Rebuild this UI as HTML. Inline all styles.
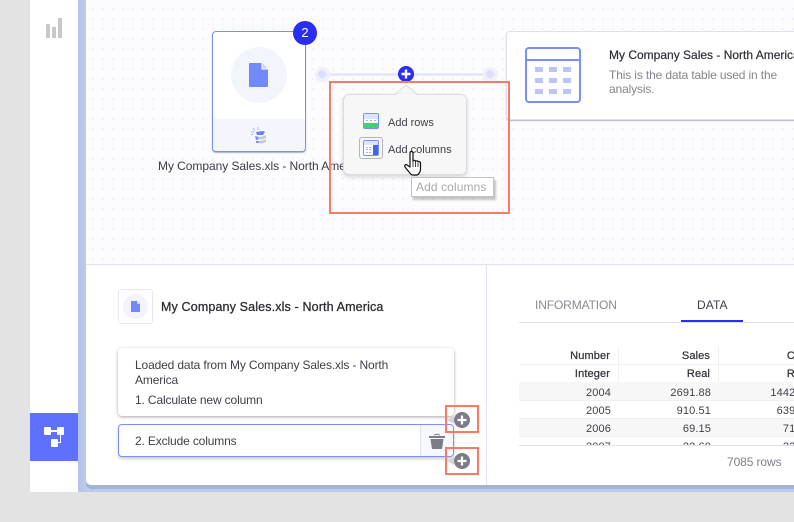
<!DOCTYPE html>
<html><head><meta charset="utf-8">
<style>
html,body{margin:0;padding:0;width:794px;height:522px;overflow:hidden;background:#e3e3e3}
body{position:relative;font-family:"Liberation Sans",sans-serif;font-size:12px;color:#3c3c48}
div,span,svg{position:absolute;box-sizing:border-box}
.t{white-space:nowrap;line-height:14px}
.s{letter-spacing:-.14px}
.r{text-align:right;width:90px;font-size:11px;letter-spacing:.12px;color:#3f3f4a;line-height:14px;white-space:nowrap}
.h{color:#33333d;-webkit-text-stroke:.25px #33333d}
</style></head><body>
<div style="left:30px;top:0;width:48px;height:492px;background:#fff"></div>
<svg style="left:46px;top:18px" width="16" height="20"><g fill="#c8c8ca"><rect x="0" y="6" width="4" height="14"/><rect x="6" y="9" width="4" height="11"/><rect x="12" y="0" width="4" height="20"/></g></svg>
<div style="left:30px;top:413px;width:48px;height:48px;background:#5f70ff"></div>
<svg style="left:44px;top:427px" width="20" height="20"><g fill="#fff"><rect x="0" y="0" width="7" height="8" rx="1"/><rect x="13" y="0" width="7" height="8" rx="1"/><rect x="7" y="12" width="7" height="8" rx="1"/><rect x="6" y="3" width="8" height="2"/><rect x="16" y="7" width="1" height="9"/><rect x="13" y="15" width="4" height="1"/></g></svg>
<div style="left:78px;top:0;width:716px;height:492px;background:#bccaeb"></div>
<div style="left:78px;top:0;width:8px;height:492px;background:linear-gradient(90deg,#b4c3e6,#bccaeb)"></div>
<div style="left:86px;top:0;width:708px;height:489px;background:#a5b3d3;border-bottom-left-radius:5px"></div>
<div style="left:86px;top:0;width:708px;height:485px;background:#fff;border-bottom-left-radius:5px;overflow:hidden">
<div style="left:0;top:0;width:708px;height:265px;background-color:#fcfcfe;background-image:radial-gradient(circle at 2px 2px,#f0f0f6 1px,transparent 1.3px);background-size:10px 10px;background-position:5px 7px;border-bottom:1px solid #e2e2ef"></div>
<div style="left:400px;top:265px;width:1px;height:220px;background:#e2e2ef"></div>
</div>

<div style="left:212px;top:31px;width:94px;height:121px;background:#fff;border:1px solid #7a8ff5;border-radius:4px;box-shadow:0 1px 1px #a9b0cc;overflow:hidden">
<div style="left:0;top:87px;width:92px;height:33px;background:#f5f6fd"></div>
</div>
<div style="left:231px;top:47px;width:56px;height:56px;border-radius:50%;background:#f3f5fd"></div>
<svg style="left:249px;top:63px" width="20" height="24"><path d="M1 0H13L19 6V23a1 1 0 0 1-1 1H1a1 1 0 0 1-1-1V1a1 1 0 0 1 1-1z" fill="#7289fc"/><path d="M13.500 0.500V5.500H18.500z" fill="#cdd5fb"/><path d="M13 0L13 6L19 6" fill="none" stroke="#fff" stroke-width="1"/></svg>
<svg style="left:250px;top:127px" width="18" height="17"><g fill="none" stroke="#a9b6fb" stroke-width="1"><path d="M1 5h3M3 1l2 2.500M8 0v3M1 8l2-1"/></g><path d="M6 5l7-1 2 1-2 3H7z" fill="#6a80f7"/><path d="M5 9l4 1-1 3H6zM6 14h3v2H6z" fill="#7c92fb"/><path d="M9 10c3 0 6-1 7-2v3c-2 1-5 2-7 1zM9 14c3 0 6-1 7-2v3c-2 1-5 2-7 1z" fill="#c6c8ce"/></svg>
<div style="left:293px;top:21px;width:24px;height:24px;border-radius:50%;background:#2a2df5;color:#fff;text-align:center;font-size:13px;line-height:24px">2</div>
<div class="t" style="left:158px;top:159px;width:186px;overflow:hidden;color:#3c3c48;letter-spacing:-.05px">My Company Sales.xls - North America</div>

<div style="left:322px;top:73px;width:168px;height:3px;background:#e4e7fd"></div>
<div style="left:315px;top:67px;width:15px;height:15px;border-radius:50%;background:#eff0fc"></div>
<div style="left:318px;top:70px;width:8px;height:8px;border-radius:50%;background:#dcdffa"></div>
<div style="left:483px;top:67px;width:15px;height:15px;border-radius:50%;background:#eff0fc"></div>
<div style="left:486px;top:70px;width:8px;height:8px;border-radius:50%;background:#dcdffa"></div>
<svg style="left:398px;top:66px" width="16" height="16"><circle cx="8" cy="8" r="8" fill="#2a2df5"/><path d="M8 3.500V12.500M3.500 8H12.500" stroke="#fff" stroke-width="2.400"/></svg>

<div style="left:506px;top:31px;width:300px;height:89px;background:#fff;border:1px solid #dfe0ea;border-radius:4px;box-shadow:0 1px 1px #b5b6c2"></div>
<svg style="left:525px;top:47px" width="56" height="56"><rect x="1" y="1" width="54" height="54" rx="3" fill="none" stroke="#7a8ffb" stroke-width="2"/><path d="M1 13H55" stroke="#7a8ffb" stroke-width="2"/><g fill="#b9c5fb"><rect x="10" y="20" width="8" height="5"/><rect x="24" y="20" width="8" height="5"/><rect x="38" y="20" width="8" height="5"/><rect x="10" y="31" width="8" height="5"/><rect x="24" y="31" width="8" height="5"/><rect x="38" y="31" width="8" height="5"/><rect x="10" y="42" width="8" height="5"/><rect x="24" y="42" width="8" height="5"/><rect x="38" y="42" width="8" height="5"/></g></svg>
<div class="t" style="left:609px;top:48px;color:#2e2e38;font-weight:400;-webkit-text-stroke:.2px #2e2e38">My Company Sales - North America</div>
<div class="t s" style="left:609px;top:68px;color:#85858f">This is the data table used in the</div>
<div class="t s" style="left:609px;top:82px;color:#85858f">analysis.</div>

<div style="left:329px;top:81px;width:181px;height:133px;border:2px solid #fb7a65"></div>

<svg style="left:392px;top:84px" width="28" height="13"><path d="M1 12L14 1L27 12" fill="#f7f7f7" stroke="#dcdcdc" stroke-width="1"/></svg>
<div style="left:343px;top:94px;width:124px;height:81px;background:#f7f7f7;border:1px solid #dcdcdc;border-top-color:#dcdcdc;border-radius:6px;box-shadow:0 2px 4px rgba(0,0,0,.16)"></div>
<div style="left:396px;top:94px;width:20px;height:2px;background:#f7f7f7"></div>
<svg style="left:363px;top:113px" width="16" height="16"><rect x=".5" y=".5" width="15" height="15" rx="1.500" fill="#fff" stroke="#7a8ffb"/><rect x="1" y="1" width="14" height="5" fill="#dfe4fd"/><rect x="1" y="10" width="14" height="5" fill="#3dd56f"/><g fill="#9fb0fb"><rect x="3" y="7" width="2" height="1"/><rect x="7" y="7" width="2" height="1"/><rect x="11" y="7" width="2" height="1"/></g></svg>
<div style="left:359px;top:137px;width:24px;height:22px;border:1px solid #b4b4ba;border-radius:3px"></div>
<svg style="left:363px;top:140px" width="16" height="16"><rect x=".5" y=".5" width="15" height="15" rx="1.500" fill="#fff" stroke="#7a8ffb"/><rect x="1" y="1" width="14" height="4" fill="#dfe4fd"/><rect x="10" y="5" width="5" height="10" fill="#4565e8"/><g fill="#9fb0fb"><rect x="3" y="7" width="2" height="1"/><rect x="6" y="7" width="2" height="1"/><rect x="3" y="9" width="2" height="1"/><rect x="6" y="9" width="2" height="1"/><rect x="3" y="12" width="2" height="1"/><rect x="6" y="12" width="2" height="1"/></g></svg>
<div class="t" style="left:388px;top:116px;font-size:11px;color:#3f3f4a">Add rows</div>
<div class="t" style="left:388px;top:143px;font-size:11px;color:#3f3f4a">Add columns</div>
<div class="t" style="left:411px;top:177px;width:83px;height:20px;background:#fff;border:1px solid #c2c2c2;box-shadow:2px 3px 2px rgba(0,0,0,.22);font-size:12px;letter-spacing:.1px;line-height:18px;padding-left:4px;color:#a9a9a9">Add columns</div>
<svg style="left:404px;top:151px" width="22" height="26"><path d="M6 2c0-2 3-2 3 0V10c0-1 2.500-1 2.500 .5 0-1 2.500-1 2.500 .5 0-1 2.500-.5 2.500 1V18c0 3-2 6-4 6H9c-2 0-3-2-4-3L1 16c-1-2 1-3 2-2l3 2z" fill="#fff" stroke="#111" stroke-width="1.200" stroke-linejoin="round"/><path d="M9 10v6M11.500 11v5M14 12v4" stroke="#111" stroke-width=".8"/></svg>

<div style="left:118px;top:289px;width:35px;height:35px;border:1px solid #e6e7f0;border-radius:3px"></div>
<div style="left:123px;top:294px;width:25px;height:25px;border-radius:50%;background:#f1f3fd"></div>
<svg style="left:131px;top:301px" width="9" height="11"><path d="M0 0H6L9 3V11H0z" fill="#7289fc"/><path d="M6 0V3H9z" fill="#cdd5fb"/></svg>
<div class="t" style="left:161px;top:300px;font-size:12.500px;letter-spacing:.14px;color:#2e2e38;-webkit-text-stroke:.3px #2e2e38">My Company Sales.xls - North America</div>

<div style="left:118px;top:348px;width:336px;height:68px;background:#fff;border-radius:4px;box-shadow:0 1px 3px rgba(0,0,0,.35)"></div>
<div class="t s" style="left:135px;top:358px;color:#3f3f4a">Loaded data from My Company Sales.xls - North</div>
<div class="t s" style="left:135px;top:373px;color:#3f3f4a">America</div>
<div class="t s" style="left:135px;top:393px;color:#3f3f4a">1. Calculate new column</div>
<div style="left:118px;top:424px;width:336px;height:33px;background:#fff;border:1px solid #7a8ffb;border-radius:4px;box-shadow:0 2px 3px rgba(0,0,0,.2);overflow:hidden">
<div style="left:301px;top:0;width:34px;height:31px;background:#f7f8fe;border-left:1px solid #e2e2ea"></div>
</div>
<div class="t s" style="left:135px;top:434px;color:#3f3f4a">2. Exclude columns</div>
<svg style="left:429px;top:433px" width="16" height="16"><path d="M5.500 2.500C5.500 .8 10.500 .8 10.500 2.500" fill="none" stroke="#7b7c85"/><path d="M0 3h16v2H0zM1.500 6h13l-1.300 9a1 1 0 0 1-1 1H3.800a1 1 0 0 1-1-1z" fill="#7b7c85"/></svg>
<svg style="left:447px;top:411px" width="24" height="18"><path d="M0 9L7 5V13z" fill="#d4d4d8"/><circle cx="15" cy="9" r="8" fill="#7b7c85"/><path d="M15 4.500V13.500M10.500 9H19.500" stroke="#fff" stroke-width="2.200"/></svg>
<svg style="left:447px;top:452px" width="24" height="18"><path d="M0 9L7 5V13z" fill="#d4d4d8"/><circle cx="15" cy="9" r="8" fill="#7b7c85"/><path d="M15 4.500V13.500M10.500 9H19.500" stroke="#fff" stroke-width="2.200"/></svg>
<div style="left:445px;top:405px;width:34px;height:28px;border:2px solid #fb7a65"></div>
<div style="left:445px;top:447px;width:34px;height:28px;border:2px solid #fb7a65"></div>

<div class="t" style="left:535px;top:298px;color:#8a8a94;letter-spacing:-.12px">INFORMATION</div>
<div class="t" style="left:697px;top:298px;color:#3f3f4a;letter-spacing:.1px">DATA</div>
<div style="left:519px;top:322px;width:275px;height:1px;background:#e0e0ec"></div>
<div style="left:681px;top:320px;width:62px;height:2px;background:#2a2df5"></div>

<div style="left:519px;top:364px;width:275px;height:1px;background:#f0f0f0"></div>
<div style="left:618px;top:347px;width:1px;height:35px;background:#f0f0f0"></div>
<div style="left:718px;top:347px;width:1px;height:35px;background:#f0f0f0"></div>
<div style="left:519px;top:382px;width:275px;height:18px;background:#f7f7f7"></div>
<div style="left:519px;top:418px;width:275px;height:18px;background:#f7f7f7"></div>
<div style="left:519px;top:400px;width:275px;height:1px;background:#efefef"></div>
<div style="left:519px;top:418px;width:275px;height:1px;background:#efefef"></div>
<div style="left:519px;top:436px;width:275px;height:1px;background:#efefef"></div>
<div style="left:519px;top:340px;width:275px;height:105px;overflow:hidden">
<div class="r h" style="left:1px;top:9px">Number</div><div class="r h" style="left:101px;top:9px">Sales</div><div class="r h" style="left:201px;top:9px">Cost</div>
<div class="r h" style="left:1px;top:27px">Integer</div><div class="r h" style="left:101px;top:27px">Real</div><div class="r h" style="left:201px;top:27px">Real</div>
<div class="r" style="left:2px;top:46px">2004</div><div class="r" style="left:102px;top:46px">2691.88</div><div class="r" style="left:202px;top:46px">1442.02</div>
<div class="r" style="left:2px;top:64px">2005</div><div class="r" style="left:102px;top:64px">910.51</div><div class="r" style="left:202px;top:64px">639.23</div>
<div class="r" style="left:2px;top:82px">2006</div><div class="r" style="left:102px;top:82px">69.15</div><div class="r" style="left:202px;top:82px">71.33</div>
<div class="r" style="left:2px;top:100px">2007</div><div class="r" style="left:102px;top:100px">22.60</div><div class="r" style="left:202px;top:100px">23.10</div>
</div>
<div style="left:519px;top:445px;width:275px;height:1px;background:#e0e0ec"></div>
<div class="t" style="left:727px;top:455px;color:#7f7f89;letter-spacing:-.1px">7085 rows</div>
</body></html>
